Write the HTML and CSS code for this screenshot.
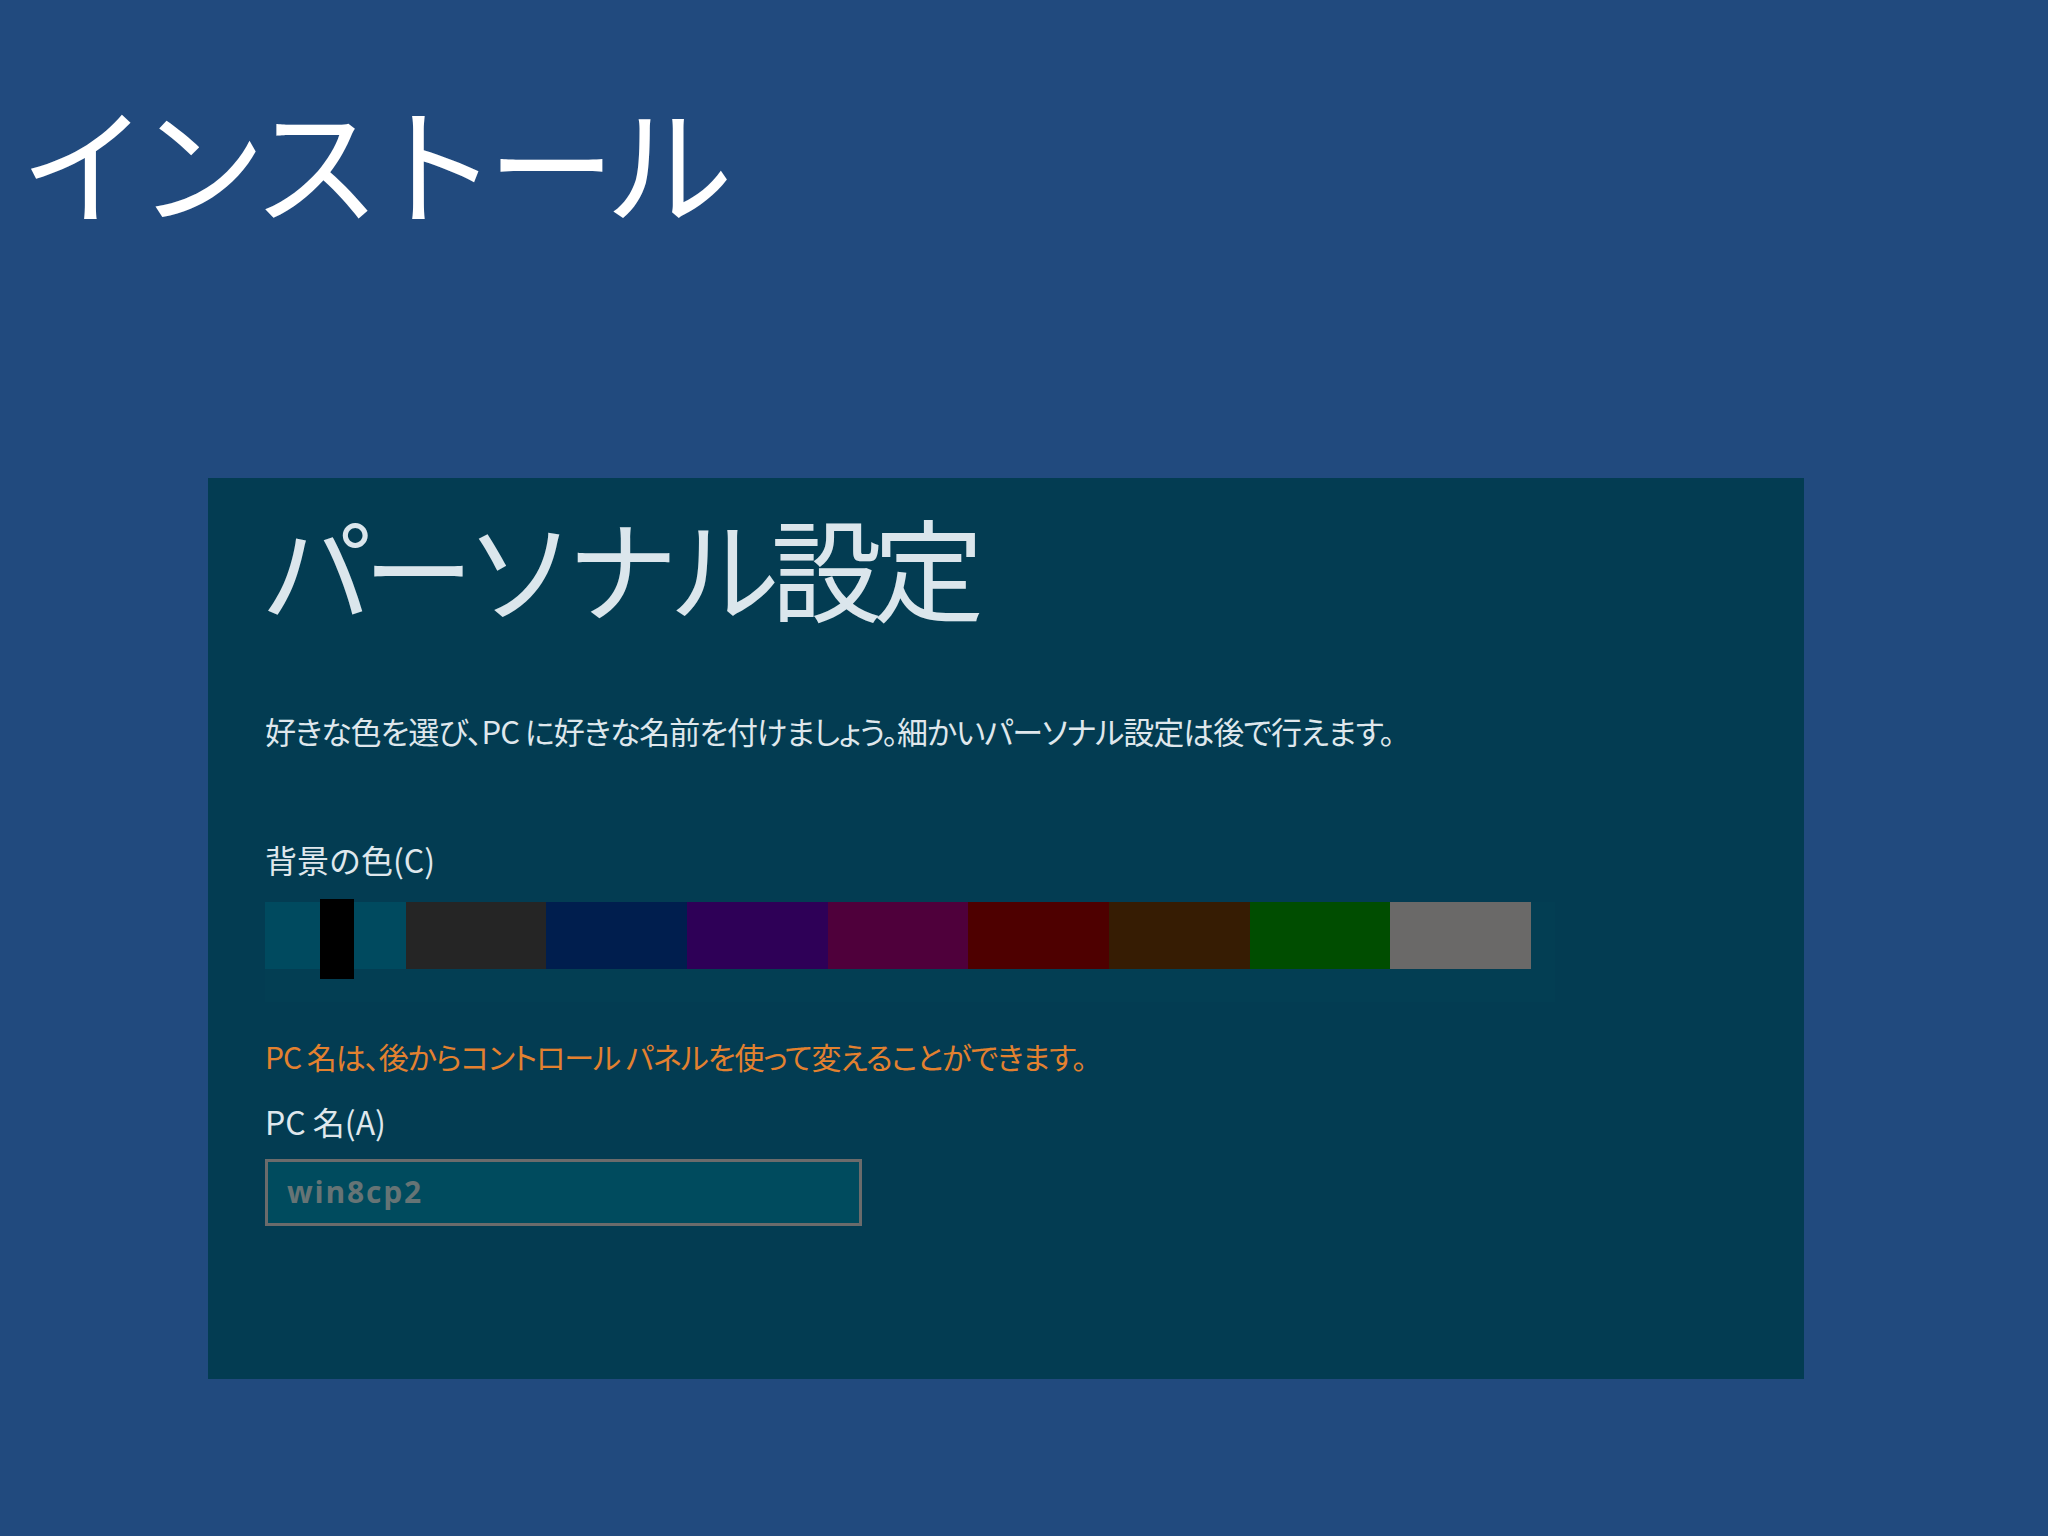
FILE: index.html
```html
<!DOCTYPE html>
<html lang="ja">
<head>
<meta charset="utf-8">
<title>インストール</title>
<link rel="stylesheet" href="styles.css">
</head>
<body>
<header class="top">
  <h1 class="page-title">インストール</h1>
</header>
<main class="panel">
  <h2 class="panel-title">パーソナル設定</h2>
  <p class="desc">好きな色を選び、PC に好きな名前を付けましょう。細かいパーソナル設定は後で行えます。</p>
  <div class="label label-color">背景の色(C)</div>
  <div class="swatch-area">
    <div class="swatches">
      <div class="swatch sw-teal selected"><span class="marker"></span></div>
      <div class="swatch sw-gray"></div>
      <div class="swatch sw-navy"></div>
      <div class="swatch sw-purple"></div>
      <div class="swatch sw-plum"></div>
      <div class="swatch sw-red"></div>
      <div class="swatch sw-brown"></div>
      <div class="swatch sw-green"></div>
      <div class="swatch sw-silver"></div>
    </div>
  </div>
  <p class="note">PC 名は、後からコントロール パネルを使って変えることができます。</p>
  <div class="label label-name">PC 名(A)</div>
  <div class="input">win8cp2</div>
</main>
</body>
</html>
```
FILE: styles.css
```css
html, body {
  margin: 0;
  padding: 0;
}
body {
  width: 2048px;
  height: 1536px;
  overflow: hidden;
  background: #214a7e;
  font-family: "Noto Sans CJK JP", "Noto Sans", sans-serif;
  color: #dfe7ec;
}
.top {
  height: 478px;
  box-sizing: border-box;
  padding: 96px 0 0 20px;
}
.page-title {
  margin: 0;
  font-size: 128px;
  line-height: 1;
  font-weight: 400;
  letter-spacing: -10.5px;
  color: #ffffff;
}
.panel {
  display: block;
  margin-left: 208px;
  width: 1596px;
  height: 901px;
  box-sizing: border-box;
  background: #033c52;
  padding: 32px 0 0 53px;
}
.panel-title {
  margin: 0;
  font-size: 111px;
  line-height: 1;
  font-weight: 400;
  letter-spacing: -9px;
  color: #dbe6ec;
}
.desc {
  margin: 94px 0 0 4px;
  font-size: 31px;
  line-height: 1;
  letter-spacing: -1px;
  font-feature-settings: "palt";
  color: #dfe7ec;
}
.label {
  margin-left: 4px;
  font-size: 32px;
  line-height: 1;
  color: #dfe7ec;
}
.label-color {
  margin-top: 97px;
}
.swatch-area {
  margin-top: 27px;
  width: 1290px;
  height: 100px;
  margin-left: 4px;
  background: #033e53;
}
.swatches {
  display: flex;
  width: 1266px;
  height: 67px;
}
.swatch {
  flex: 1 1 0;
  position: relative;
}
.marker {
  position: absolute;
  left: 55px;
  top: -3px;
  width: 34px;
  height: 80px;
  background: #000000;
}
.sw-teal { background: #004a5f; }
.sw-gray { background: #252525; }
.sw-navy { background: #001e4e; }
.sw-purple { background: #2e0057; }
.sw-plum { background: #4f003b; }
.sw-red { background: #4e0000; }
.sw-brown { background: #361c03; }
.sw-green { background: #004d00; }
.sw-silver { background: #6a6968; }
.note {
  margin: 39px 0 0 4px;
  font-size: 30px;
  line-height: 1;
  letter-spacing: -1px;
  font-feature-settings: "palt";
  color: #e3812f;
}
.label-name {
  margin-top: 34px;
}
.input {
  margin-top: 22px;
  margin-left: 4px;
  width: 597px;
  height: 67px;
  box-sizing: border-box;
  border: 3px solid #6b6b6b;
  background: #004b5e;
  padding: 0 0 2px 19px;
  display: flex;
  align-items: center;
  font-family: "Open Sans", "Liberation Sans", sans-serif;
  font-weight: 700;
  font-size: 30px;
  letter-spacing: 1.8px;
  color: #667475;
}
```
